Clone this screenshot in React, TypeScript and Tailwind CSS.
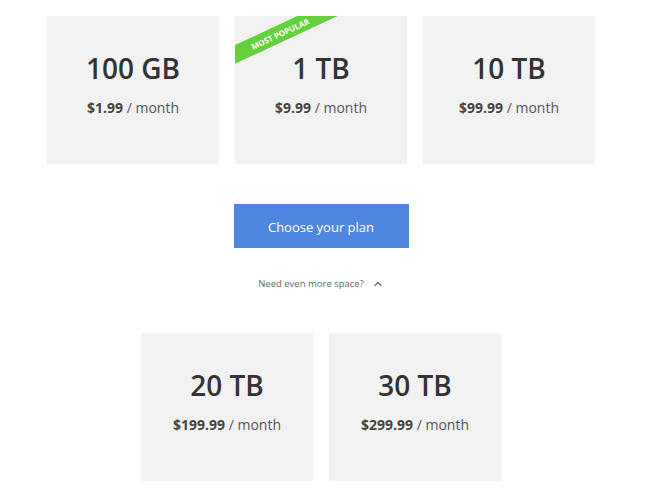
import { ChevronUp } from "lucide-react";

type Plan = { size: string; price: string; popular?: boolean };

const topPlans: Plan[] = [
  { size: "100 GB", price: "$1.99" },
  { size: "1 TB", price: "$9.99", popular: true },
  { size: "10 TB", price: "$99.99" },
];

const morePlans: Plan[] = [
  { size: "20 TB", price: "$199.99" },
  { size: "30 TB", price: "$299.99" },
];

function PlanCard({ plan }: { plan: Plan }) {
  return (
    <div className="relative w-[172px] h-[148px] bg-[#f2f2f2] overflow-hidden flex flex-col items-center">
      {/* Ribbon */}
      {plan.popular && (
        <div className="absolute left-[-60px] top-[9px] w-[210px] h-[17px] bg-[#62d13c] -rotate-[25deg] flex items-center justify-center">
          <span className="text-[8px] font-bold text-white uppercase leading-none">
            Most Popular
          </span>
        </div>
      )}
      <p className="mt-[36px] text-[28px] leading-[32px] font-semibold text-[#333]">{plan.size}</p>
      <p className="mt-[15px] text-[14px] leading-[18px] text-[#555]">
        <span className="font-bold text-[#444]">{plan.price}</span> / month
      </p>
    </div>
  );
}

export default function App() {
  return (
    <div className="w-[650px] h-[493px] bg-white overflow-hidden" style={{ fontFamily: '"Open Sans", sans-serif' }}>
      <div className="w-[642px] flex flex-col items-center pt-[16px]">
        {/* Main plans */}
        <div className="flex gap-[16px]">
          {topPlans.map((p) => (
            <PlanCard key={p.size} plan={p} />
          ))}
        </div>

        {/* Button */}
        <button className="mt-[40px] w-[175px] h-[44px] bg-[#4f87e0] text-white text-[13px] leading-[18px] pt-[2px]">
          Choose your plan
        </button>

        {/* Toggle */}
        <div className="mt-[29px] flex items-center gap-[8px] text-[9.5px] text-[#666]">
          <span>Need even more space?</span>
          <ChevronUp size={12} strokeWidth={2.5} className="text-[#666]" />
        </div>

        {/* Extra plans */}
        <div className="mt-[42px] flex gap-[16px]">
          {morePlans.map((p) => (
            <PlanCard key={p.size} plan={p} />
          ))}
        </div>
      </div>
    </div>
  );
}
